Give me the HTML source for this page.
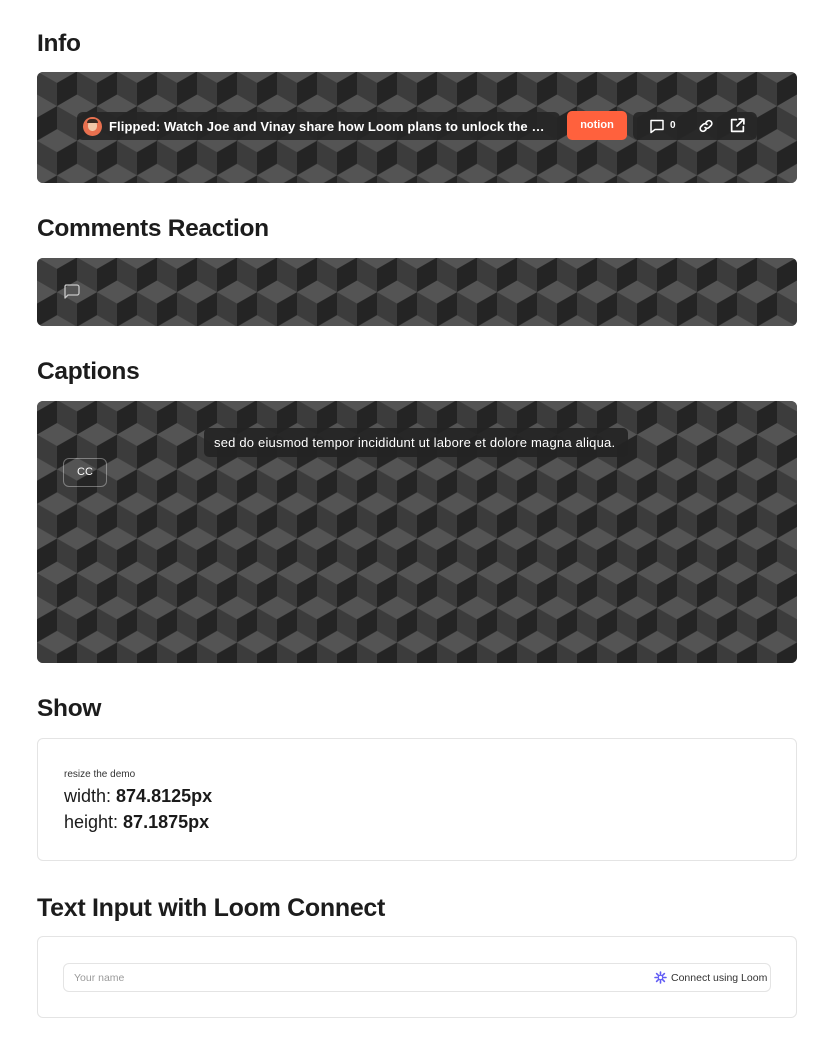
<!DOCTYPE html>
<html><head><meta charset="utf-8">
<style>
*{box-sizing:border-box;margin:0;padding:0}
body{width:833px;height:1051px;background:#fff;font-family:"Liberation Sans",sans-serif;color:#1a1a1a;position:relative;overflow:hidden}
h2{position:absolute;left:37px;font-size:24.5px;font-weight:bold;letter-spacing:-0.3px;color:#1c1c1c}
.panel{position:absolute;left:37px;width:760px;border-radius:6px;overflow:hidden;background:#555}
.panel svg.bg{position:absolute;left:0;top:0}
.box{position:absolute;left:37px;width:760px;border:1px solid #e4e4e4;border-radius:6px;background:#fff}
.w{color:#fff}
</style></head><body>
<svg width="0" height="0" style="position:absolute">
<defs>
<g id="cubes">
<rect x="-40" y="-80" width="120" height="160" fill="#545454"/>
<g>
<polygon points="0,11.55 20,23.1 20,46.19 0,34.64" fill="#3c3c3c"/><polygon points="20,23.1 40,11.55 40,34.64 20,46.19" fill="#242424"/>
<polygon points="-20,46.19 0,57.74 0,80.83 -20,69.28" fill="#3c3c3c"/><polygon points="0,57.74 20,46.19 20,69.28 0,80.83" fill="#242424"/>
<polygon points="20,46.19 40,57.74 40,80.83 20,69.28" fill="#3c3c3c"/><polygon points="40,57.74 60,46.19 60,69.28 40,80.83" fill="#242424"/>
<polygon points="-20,-23.09 0,-11.54 0,11.55 -20,0" fill="#3c3c3c"/><polygon points="0,-11.54 20,-23.09 20,0 0,11.55" fill="#242424"/>
<polygon points="20,-23.09 40,-11.54 40,11.55 20,0" fill="#3c3c3c"/><polygon points="40,-11.54 60,-23.09 60,0 40,11.55" fill="#242424"/>
</g>
</g>
<pattern id="p1" width="40" height="69.28" patternUnits="userSpaceOnUse" patternTransform="translate(20,22.5)"><use href="#cubes"/></pattern>
<pattern id="p3" width="40" height="69.28" patternUnits="userSpaceOnUse" patternTransform="translate(0,22)"><use href="#cubes"/></pattern>
</defs></svg>

<h2 style="top:30px">Info</h2>
<div class="panel" style="top:72px;height:111px">
<svg class="bg" width="760" height="111"><rect width="760" height="111" fill="url(#p1)"/></svg>
<div style="position:absolute;left:40px;top:40px;width:483px;height:28px;background:rgba(38,38,38,.92);border-radius:6px"></div>
<div style="position:absolute;left:46px;top:45px;width:19px;height:19px;border-radius:50%;background:#e8704f;overflow:hidden"><div style="position:absolute;left:5px;top:3px;width:9px;height:11px;border-radius:45%;background:#f1c7a8"></div><div style="position:absolute;left:4px;top:2px;width:11px;height:4px;border-radius:4px 4px 0 0;background:#3a2a22"></div></div>
<div class="w" style="position:absolute;left:72px;top:47px;font-size:13px;font-weight:bold;letter-spacing:0.1px;white-space:nowrap">Flipped: Watch Joe and Vinay share how Loom plans to unlock the …</div>
<div style="position:absolute;left:530px;top:39px;width:60px;height:29px;background:#ff613d;border-radius:5px;color:#fff;font-size:11px;font-weight:bold;text-align:center;line-height:29px">notion</div>
<div style="position:absolute;left:596px;top:40px;width:124px;height:28px;background:rgba(38,38,38,.92);border-radius:6px"></div>
<svg style="position:absolute;left:612px;top:46px" width="16" height="16" viewBox="0 0 16 16" fill="none" stroke="#fff" stroke-width="1.5"><path d="M2 2.5h12v9H6l-4 3z" stroke-linejoin="round"/></svg>
<div class="w" style="position:absolute;left:633px;top:48px;font-size:10px;font-weight:bold">0</div>
<svg style="position:absolute;left:661px;top:46px" width="16" height="16" viewBox="0 0 16 16" fill="none" stroke="#fff" stroke-width="1.6" stroke-linecap="round"><path d="M7 9.5a3 3 0 0 0 4 0l2-2a2.8 2.8 0 0 0-4-4l-1 1"/><path d="M9 6.5a3 3 0 0 0-4 0l-2 2a2.8 2.8 0 0 0 4 4l1-1"/></svg>
<svg style="position:absolute;left:692px;top:45px" width="17" height="17" viewBox="0 0 16 16" fill="none" stroke="#fff" stroke-width="1.6" stroke-linecap="round" stroke-linejoin="round"><path d="M7 2.5H2.5v11h11V9"/><path d="M9.5 2h4.5v4.5M14 2L7.5 8.5"/></svg>
</div>

<h2 style="top:215px">Comments Reaction</h2>
<div class="panel" style="top:258px;height:68px">
<svg class="bg" width="760" height="68"><rect width="760" height="68" fill="url(#p1)"/></svg>
<svg style="position:absolute;left:26px;top:26px" width="17" height="16" viewBox="0 0 17 16" fill="none" stroke="#c8c8c8" stroke-width="1.3"><path d="M3 1h11a2 2 0 0 1 2 2v6a2 2 0 0 1-2 2H5l-3 3v-11a2 2 0 0 1 1-2z" stroke-linejoin="round"/></svg>
</div>

<h2 style="top:358px">Captions</h2>
<div class="panel" style="top:401px;height:262px">
<svg class="bg" width="760" height="262"><rect width="760" height="262" fill="url(#p3)"/></svg>
<div class="w" style="position:absolute;left:167px;top:27px;width:424px;height:29px;background:rgba(36,36,36,.93);border-radius:5px;font-size:13px;line-height:29px;padding-left:10px;white-space:nowrap;letter-spacing:0.2px">sed do eiusmod tempor incididunt ut labore et dolore magna aliqua.</div>
<div class="w" style="position:absolute;left:26px;top:57px;width:44px;height:29px;border:1px solid rgba(255,255,255,.35);border-radius:6px;font-size:11px;text-align:center;line-height:27px">CC</div>
</div>

<h2 style="top:695px">Show</h2>
<div class="box" style="top:738px;height:123px">
<div style="position:absolute;left:26px;top:30px;font-size:10px;color:#333">resize the demo</div>
<div style="position:absolute;left:26px;top:47px;font-size:18px;color:#1a1a1a">width: <b>874.8125px</b></div>
<div style="position:absolute;left:26px;top:73px;font-size:18px;color:#1a1a1a">height: <b>87.1875px</b></div>
</div>

<h2 style="top:894px;font-size:25px">Text Input with Loom Connect</h2>
<div class="box" style="top:936px;height:82px">
<div style="position:absolute;left:25px;top:26px;width:708px;height:29px;border:1px solid #e4e4e4;border-radius:6px">
<div style="position:absolute;left:10px;top:8px;font-size:10.5px;color:#9a9a9a">Your name</div>
<svg style="position:absolute;left:590px;top:7px" width="13" height="13" viewBox="0 0 13 13" stroke="#625df5" stroke-width="1.6" stroke-linecap="round"><path d="M6.5 1v11M1 6.5h11M2.6 2.6l7.8 7.8M10.4 2.6l-7.8 7.8"/><circle cx="6.5" cy="6.5" r="2.2" fill="#fff" stroke="#625df5" stroke-width="1.2"/></svg>
<div style="position:absolute;left:607px;top:8px;font-size:10.5px;color:#333">Connect using Loom</div>
</div>
</div>
</body></html>
